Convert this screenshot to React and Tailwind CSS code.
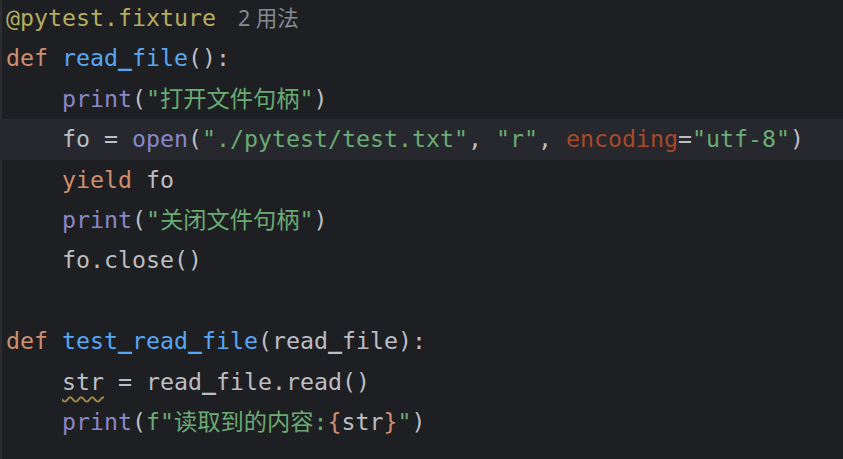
import React from 'react';

const C = {
  deco: 'text-[#b3ae60]',
  kw: 'text-[#cf8e6d]',
  fn: 'text-[#56a8f5]',
  bi: 'text-[#8888c6]',
  str: 'text-[#6aab73]',
  param: 'text-[#aa4926]',
};

const Line = ({ children, current }) => (
  <div className={`h-[40.4px] leading-[40.4px] pl-[6px] whitespace-pre ${current ? 'bg-[#26282e]' : ''}`}>
    {children}
  </div>
);

const Ind = () => <span>{'    '}</span>;

// underscores come out too faint in DejaVu at this size, bold them
const U = () => <span className="font-bold">_</span>;

const App = () => {
  return (
    <div className="w-[843px] h-[459px] overflow-hidden bg-[#1e1f22] flex">
      <div className="w-[2px] shrink-0 bg-[#2b2d30]" />
      <div
        className="flex-1 -ml-[2px] mt-[-2px] text-[23.25px] text-[#bcbec4]"
        style={{ fontFamily: '"DejaVu Sans Mono", "Noto Sans CJK SC", monospace' }}
      >
        <Line>
          <span className={C.deco}>@pytest.fixture</span>
          <span className="ml-[22px] text-[21.5px] text-[#868a91]" style={{ fontFamily: '"Noto Sans", "Noto Sans CJK SC", sans-serif' }}>2 用法</span>
        </Line>
        <Line>
          <span className={C.kw}>def </span><span className={C.fn}>read<U />file</span>():
        </Line>
        <Line>
          <Ind /><span className={C.bi}>print</span>(<span className={C.str}>"打开文件句柄"</span>)
        </Line>
        <Line current>
          <Ind />fo = <span className={C.bi}>open</span>(<span className={C.str}>"./pytest/test.txt"</span>, <span className={C.str}>"r"</span>, <span className={C.param}>encoding</span>=<span className={C.str}>"utf-8"</span>)
        </Line>
        <Line>
          <Ind /><span className={C.kw}>yield </span>fo
        </Line>
        <Line>
          <Ind /><span className={C.bi}>print</span>(<span className={C.str}>"关闭文件句柄"</span>)
        </Line>
        <Line>
          <Ind />fo.close()
        </Line>
        <Line />
        <Line>
          <span className={C.kw}>def </span><span className={C.fn}>test<U />read<U />file</span>(read<U />file):
        </Line>
        <Line>
          <Ind /><span className="underline decoration-wavy decoration-[#a38a45] decoration-[1.5px] underline-offset-[6px]">str</span> = read<U />file.read()
        </Line>
        <Line>
          <Ind /><span className={C.bi}>print</span>(<span className={C.str}>f"读取到的内容:</span><span className={C.kw}>{'{'}</span>str<span className={C.kw}>{'}'}</span><span className={C.str}>"</span>)
        </Line>
      </div>
    </div>
  );
};

export default App;
